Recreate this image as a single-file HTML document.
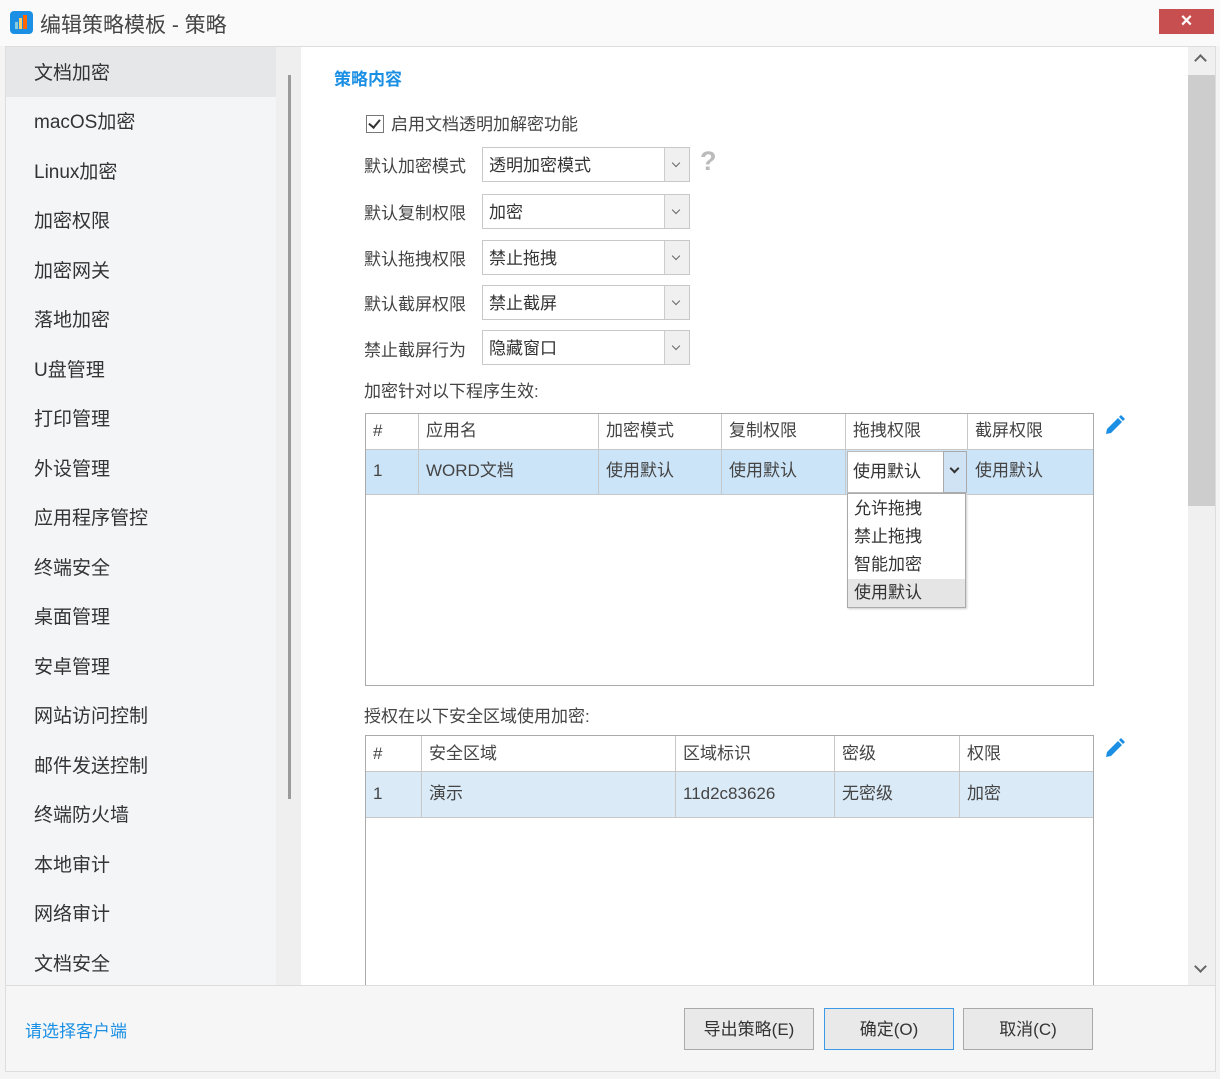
<!DOCTYPE html>
<html><head><meta charset="utf-8"><style>
*{margin:0;padding:0;box-sizing:border-box}
body{width:1220px;height:1079px;background:#f4f4f4;font-family:"Liberation Sans","Noto Sans CJK SC",sans-serif;color:#333;position:relative;overflow:hidden}
.a{position:absolute}
.side{left:6px;top:47px;width:270px;height:938px;background:#f4f5f7}
.si{position:absolute;left:34px;font-size:19px;color:#333;white-space:nowrap;margin-top:-2px}
.lbl{font-size:17px;color:#444;white-space:nowrap;margin-top:-2px}
.sel{position:absolute;left:482px;width:208px;height:35px;border:1px solid #c8c8c8;background:#fff;font-size:17px;padding:3px 6px;color:#333}
.sel .b{position:absolute;right:0;top:0;width:25px;height:33px;border-left:1px solid #ccc;background:#f0f0f0}
.sel .b:after{content:"";position:absolute;left:8px;top:12px;width:5px;height:5px;border-right:1.5px solid #666;border-bottom:1.5px solid #666;transform:rotate(45deg)}
.tbl{border:1px solid #aaa;background:#fff}
.cell{position:absolute;font-size:17px;color:#444;padding-left:7px;border-right:1px solid #c8c8c8;white-space:nowrap}
.btn{position:absolute;top:1008px;width:130px;height:42px;border:1px solid #aaa;background:#e9e9e9;font-size:17px;text-align:center;line-height:42px;color:#333}
</style></head><body>
<div class="a" style="left:0;top:0;width:1220px;height:46px;background:#fafafa"></div>
<div class="a" style="left:10px;top:11px;width:23px;height:23px;background:#1a8fe3;border-radius:4px"></div>
<div class="a" style="left:15px;top:22px;width:3px;height:7px;background:#8cd"></div>
<div class="a" style="left:19px;top:18px;width:3px;height:11px;background:#fc6"></div>
<div class="a" style="left:23px;top:15px;width:4px;height:14px;background:#f60"></div>
<div class="a" style="left:40px;top:9px;font-size:21px;color:#444">编辑策略模板 - 策略</div>
<div class="a" style="left:1159px;top:9px;width:55px;height:25px;background:#c84f4f;color:#fff;font-size:20px;text-align:center;line-height:25px;font-weight:bold">×</div>
<div class="a" style="left:5px;top:46px;width:1211px;height:1026px;border:1px solid #ddd"></div>
<div class="a side"></div>
<div class="a" style="left:6px;top:47px;width:270px;height:50px;background:#e6e7e9"></div>
<div class="a" style="left:276px;top:47px;width:25px;height:938px;background:#efefef"></div>
<div class="a" style="left:288px;top:75px;width:3px;height:724px;background:#9a9a9a"></div>
<div class="a" style="left:309px;top:503px;width:3px;height:22px;border-left:3px dotted #888"></div>
<div class="a" style="left:301px;top:47px;width:887px;height:938px;background:#fff"></div>
<div class="a" style="left:1188px;top:47px;width:27px;height:938px;background:#f0f0f0"></div>
<div class="a" style="left:1188px;top:75px;width:27px;height:431px;background:#cdcdcd"></div>
<div class="a" style="left:1196px;top:56px;width:9px;height:9px;border-left:2px solid #666;border-top:2px solid #666;transform:rotate(45deg)"></div>
<div class="a" style="left:1196px;top:962px;width:9px;height:9px;border-right:2px solid #666;border-bottom:2px solid #666;transform:rotate(45deg)"></div>

<div class="si" style="top:60px">文档加密</div>
<div class="si" style="top:109px">macOS加密</div>
<div class="si" style="top:159px">Linux加密</div>
<div class="si" style="top:208px">加密权限</div>
<div class="si" style="top:258px">加密网关</div>
<div class="si" style="top:307px">落地加密</div>
<div class="si" style="top:357px">U盘管理</div>
<div class="si" style="top:406px">打印管理</div>
<div class="si" style="top:456px">外设管理</div>
<div class="si" style="top:505px">应用程序管控</div>
<div class="si" style="top:555px">终端安全</div>
<div class="si" style="top:604px">桌面管理</div>
<div class="si" style="top:654px">安卓管理</div>
<div class="si" style="top:703px">网站访问控制</div>
<div class="si" style="top:753px">邮件发送控制</div>
<div class="si" style="top:802px">终端防火墙</div>
<div class="si" style="top:852px">本地审计</div>
<div class="si" style="top:901px">网络审计</div>
<div class="si" style="top:951px">文档安全</div>

<div class="a" style="left:334px;top:67px;font-size:17px;color:#1a8fe3;font-weight:bold;margin-top:-2px">策略内容</div>
<div class="a" style="left:366px;top:115px;width:18px;height:18px;border:1px solid #777;background:#fff"></div>
<div class="a" style="left:371px;top:117px;width:7px;height:11px;border-right:2px solid #333;border-bottom:2px solid #333;transform:rotate(40deg)"></div>
<div class="a lbl" style="left:391px;top:112px">启用文档透明加解密功能</div>
<div class="a lbl" style="left:364px;top:154px">默认加密模式</div>
<div class="sel" style="top:147px">透明加密模式<div class="b"></div></div>
<div class="a" style="left:700px;top:146px;font-size:27px;color:#bbb;font-weight:bold">?</div>
<div class="a lbl" style="left:364px;top:201px">默认复制权限</div>
<div class="sel" style="top:194px">加密<div class="b"></div></div>
<div class="a lbl" style="left:364px;top:247px">默认拖拽权限</div>
<div class="sel" style="top:240px">禁止拖拽<div class="b"></div></div>
<div class="a lbl" style="left:364px;top:292px">默认截屏权限</div>
<div class="sel" style="top:285px">禁止截屏<div class="b"></div></div>
<div class="a lbl" style="left:364px;top:338px">禁止截屏行为</div>
<div class="sel" style="top:330px">隐藏窗口<div class="b"></div></div>
<div class="a lbl" style="left:364px;top:379px">加密针对以下程序生效:</div>

<div class="a tbl" style="left:365px;top:413px;width:729px;height:273px"></div>
<div class="a" style="left:366px;top:449px;width:727px;height:46px;background:#cce4f7;border-top:1px solid #c8c8c8;border-bottom:1px solid #c8c8c8"></div>
<div class="cell" style="left:366px;top:414px;width:53px;height:35px;line-height:34px">#</div>
<div class="cell" style="left:419px;top:414px;width:180px;height:35px;line-height:34px">应用名</div>
<div class="cell" style="left:599px;top:414px;width:123px;height:35px;line-height:34px">加密模式</div>
<div class="cell" style="left:722px;top:414px;width:124px;height:35px;line-height:34px">复制权限</div>
<div class="cell" style="left:846px;top:414px;width:122px;height:35px;line-height:34px">拖拽权限</div>
<div class="cell" style="left:968px;top:414px;width:125px;height:35px;line-height:34px;border:0">截屏权限</div>
<div class="cell" style="left:366px;top:450px;width:53px;height:44px;line-height:42px">1</div>
<div class="cell" style="left:419px;top:450px;width:180px;height:44px;line-height:42px">WORD文档</div>
<div class="cell" style="left:599px;top:450px;width:123px;height:44px;line-height:42px">使用默认</div>
<div class="cell" style="left:722px;top:450px;width:124px;height:44px;line-height:42px">使用默认</div>
<div class="cell" style="left:968px;top:450px;width:125px;height:44px;line-height:42px;border:0">使用默认</div>
<div class="a" style="left:847px;top:451px;width:120px;height:42px;background:#fff;border:1px solid #bbb;font-size:17px;line-height:40px;padding-left:5px">使用默认</div>
<div class="a" style="left:943px;top:451px;width:24px;height:42px;background:#cfe3f5;border:1px solid #aaa"></div>
<div class="a" style="left:951px;top:465px;width:7px;height:7px;border-right:2px solid #333;border-bottom:2px solid #333;transform:rotate(45deg)"></div>
<div class="a" style="left:847px;top:493px;width:119px;height:115px;background:#fff;border:1px solid #aaa;box-shadow:1px 1px 2px #ccc;font-size:17px;line-height:28px">
<div style="padding-left:6px;padding-top:1px">允许拖拽</div><div style="padding-left:6px">禁止拖拽</div><div style="padding-left:6px">智能加密</div><div style="padding-left:6px;background:#e5e5e5">使用默认</div></div>
<svg class="a" style="left:1104px;top:414px" width="22" height="22" viewBox="0 0 22 22"><path d="M2 20 L3 15 L14 4 L18 8 L7 19 Z" fill="#1a8fe3"/><path d="M15 3 L17 1 L21 5 L19 7 Z" fill="#1a8fe3"/></svg>

<div class="a lbl" style="left:364px;top:704px">授权在以下安全区域使用加密:</div>
<div class="a tbl" style="left:365px;top:735px;width:729px;height:260px"></div>
<div class="a" style="left:366px;top:771px;width:727px;height:47px;background:#daeaf7;border-top:1px solid #c8c8c8;border-bottom:1px solid #c8c8c8"></div>
<div class="cell" style="left:366px;top:736px;width:56px;height:35px;line-height:36px">#</div>
<div class="cell" style="left:422px;top:736px;width:254px;height:35px;line-height:36px">安全区域</div>
<div class="cell" style="left:676px;top:736px;width:159px;height:35px;line-height:36px">区域标识</div>
<div class="cell" style="left:835px;top:736px;width:125px;height:35px;line-height:36px">密级</div>
<div class="cell" style="left:960px;top:736px;width:133px;height:35px;line-height:36px;border:0">权限</div>
<div class="cell" style="left:366px;top:772px;width:56px;height:45px;line-height:43px">1</div>
<div class="cell" style="left:422px;top:772px;width:254px;height:45px;line-height:43px">演示</div>
<div class="cell" style="left:676px;top:772px;width:159px;height:45px;line-height:43px">11d2c83626</div>
<div class="cell" style="left:835px;top:772px;width:125px;height:45px;line-height:43px">无密级</div>
<div class="cell" style="left:960px;top:772px;width:133px;height:45px;line-height:43px;border:0">加密</div>
<svg class="a" style="left:1104px;top:737px" width="22" height="22" viewBox="0 0 22 22"><path d="M2 20 L3 15 L14 4 L18 8 L7 19 Z" fill="#1a8fe3"/><path d="M15 3 L17 1 L21 5 L19 7 Z" fill="#1a8fe3"/></svg>
<div class="a" style="left:6px;top:985px;width:1209px;height:86px;background:#f6f6f6;border-top:1px solid #ddd"></div>
<div class="a" style="left:25px;top:1017px;font-size:17px;color:#1a8fe3">请选择客户端</div>
<div class="btn" style="left:684px">导出策略(E)</div>
<div class="btn" style="left:824px;border-color:#3c9ae8">确定(O)</div>
<div class="btn" style="left:963px">取消(C)</div>
</body></html>
